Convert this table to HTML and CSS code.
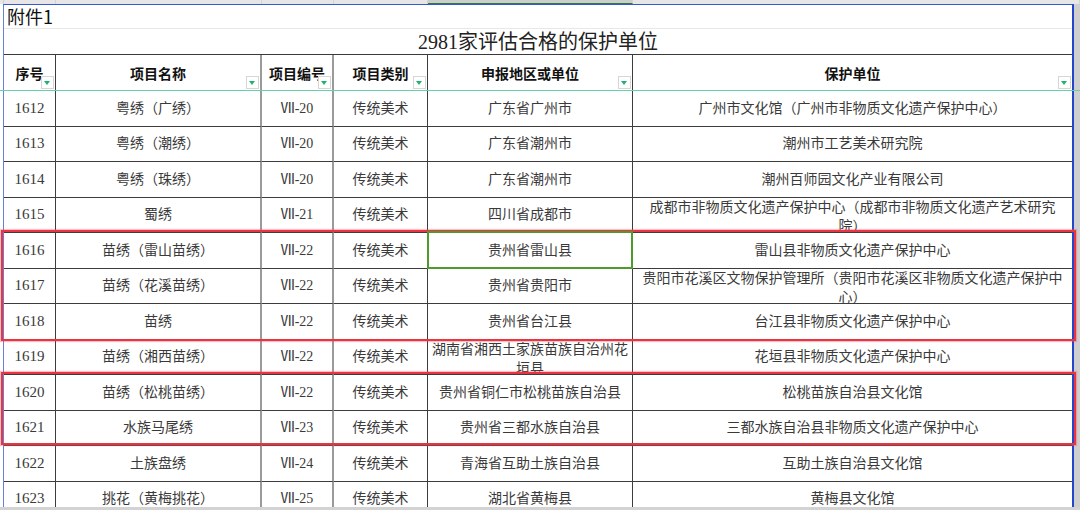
FILE: index.html
```html
<!DOCTYPE html>
<html lang="zh">
<head>
<meta charset="utf-8">
<title>2981家评估合格的保护单位</title>
<link rel="stylesheet" href="styles.css">
</head>
<body>
<div class="colbar">
  <span></span><span></span><span></span><span></span><span class="sel"></span><span></span>
</div>
<div class="main">
  <div class="sheet">
    <div class="attach">附件1</div>
    <div class="title">2981家评估合格的保护单位</div>
    <div class="grid">
      <div class="hd c1">序号<i class="flt"></i></div>
      <div class="hd c2">项目名称<i class="flt"></i></div>
      <div class="hd c3">项目编号<i class="flt"></i></div>
      <div class="hd c4">项目类别<i class="flt"></i></div>
      <div class="hd c5">申报地区或单位<i class="flt"></i></div>
      <div class="hd c6">保护单位<i class="flt"></i></div>

      <div class="td c1">1612</div><div class="td c2">粤绣（广绣）</div><div class="td c3">Ⅶ-20</div><div class="td c4">传统美术</div><div class="td c5">广东省广州市</div><div class="td c6">广州市文化馆（广州市非物质文化遗产保护中心）</div>
      <div class="td c1">1613</div><div class="td c2">粤绣（潮绣）</div><div class="td c3">Ⅶ-20</div><div class="td c4">传统美术</div><div class="td c5">广东省潮州市</div><div class="td c6">潮州市工艺美术研究院</div>
      <div class="td c1">1614</div><div class="td c2">粤绣（珠绣）</div><div class="td c3">Ⅶ-20</div><div class="td c4">传统美术</div><div class="td c5">广东省潮州市</div><div class="td c6">潮州百师园文化产业有限公司</div>
      <div class="td c1">1615</div><div class="td c2">蜀绣</div><div class="td c3">Ⅶ-21</div><div class="td c4">传统美术</div><div class="td c5">四川省成都市</div><div class="td c6">成都市非物质文化遗产保护中心（成都市非物质文化遗产艺术研究院）</div>
      <div class="td c1">1616</div><div class="td c2">苗绣（雷山苗绣）</div><div class="td c3">Ⅶ-22</div><div class="td c4">传统美术</div><div class="td c5">贵州省雷山县</div><div class="td c6">雷山县非物质文化遗产保护中心</div>
      <div class="td c1">1617</div><div class="td c2">苗绣（花溪苗绣）</div><div class="td c3">Ⅶ-22</div><div class="td c4">传统美术</div><div class="td c5">贵州省贵阳市</div><div class="td c6">贵阳市花溪区文物保护管理所（贵阳市花溪区非物质文化遗产保护中心）</div>
      <div class="td c1">1618</div><div class="td c2">苗绣</div><div class="td c3">Ⅶ-22</div><div class="td c4">传统美术</div><div class="td c5">贵州省台江县</div><div class="td c6">台江县非物质文化遗产保护中心</div>
      <div class="td c1">1619</div><div class="td c2">苗绣（湘西苗绣）</div><div class="td c3">Ⅶ-22</div><div class="td c4">传统美术</div><div class="td c5">湖南省湘西土家族苗族自治州花垣县</div><div class="td c6">花垣县非物质文化遗产保护中心</div>
      <div class="td c1">1620</div><div class="td c2">苗绣（松桃苗绣）</div><div class="td c3">Ⅶ-22</div><div class="td c4">传统美术</div><div class="td c5">贵州省铜仁市松桃苗族自治县</div><div class="td c6">松桃苗族自治县文化馆</div>
      <div class="td c1">1621</div><div class="td c2">水族马尾绣</div><div class="td c3">Ⅶ-23</div><div class="td c4">传统美术</div><div class="td c5">贵州省三都水族自治县</div><div class="td c6">三都水族自治县非物质文化遗产保护中心</div>
      <div class="td c1">1622</div><div class="td c2">土族盘绣</div><div class="td c3">Ⅶ-24</div><div class="td c4">传统美术</div><div class="td c5">青海省互助土族自治县</div><div class="td c6">互助土族自治县文化馆</div>
      <div class="td c1">1623</div><div class="td c2">挑花（黄梅挑花）</div><div class="td c3">Ⅶ-25</div><div class="td c4">传统美术</div><div class="td c5">湖北省黄梅县</div><div class="td c6">黄梅县文化馆</div>
    </div>
  </div>
  <div class="vscroll"></div>
</div>
<div class="hscroll"></div>

<div class="freeze"></div>
<div class="mark mark-a"></div>
<div class="mark mark-b"></div>
<div class="cursor"></div>
</body>
</html>
```
FILE: styles.css
```css
html, body {
  margin: 0;
  padding: 0;
}
body {
  position: relative;
  width: 1080px;
  height: 510px;
  overflow: hidden;
  background: #ffffff;
  font-family: "Liberation Serif", "Noto Sans CJK SC", serif;
  color: #333;
  text-spacing-trim: space-all;
}

/* column header strip */
.colbar {
  height: 4px;
  display: grid;
  grid-template-columns: 4px 52px 206px 72px 94px 205px 1fr;
  background: #e6e6e6;
}
.colbar::before {
  content: "";
  border-right: 1px solid #cfcfcf;
}
.colbar span {
  border-right: 1px solid #d4d4d4;
}
.colbar .sel {
  background: #cdcdcd;
  border-bottom: 1px solid #2f7d3a;
}

.main {
  display: flex;
  height: 503px;
}
.sheet {
  box-sizing: border-box;
  width: 1071px;
  margin-left: 3px;
  border-top: 1px solid #3558d2;
  border-left: 1px solid #6680dc;
  border-right: 2px solid #2446c8;
  overflow: hidden;
}
.vscroll {
  flex: 1;
  background: #cfcfcf;
}
.hscroll {
  height: 3px;
  background: #d3d3d3;
}

.attach {
  box-sizing: border-box;
  height: 24px;
  border-bottom: 1px solid #e8e8e8;
  padding-left: 3px;
  font-family: "Noto Sans CJK SC", sans-serif;
  font-size: 18px;
  line-height: 23px;
  color: #111;
}
.title {
  box-sizing: border-box;
  height: 26px;
  border-bottom: 1px solid #3a3a3a;
  text-align: center;
  font-size: 20px;
  line-height: 27px;
  color: #222;
}

.grid {
  display: grid;
  grid-template-columns: 52px 206px 72px 94px 205px 439px;
  grid-template-rows: 36px;
  grid-auto-rows: 35.5px;
}
.hd, .td {
  box-sizing: border-box;
  display: flex;
  align-items: center;
  align-items: safe center;
  justify-content: center;
  text-align: center;
  border-bottom: 1px solid #3c3c3c;
  border-right: 1px solid #3c3c3c;
  overflow: hidden;
  padding: 0 2px;
}
.hd {
  position: relative;
  font-weight: bold;
  font-size: 14px;
  color: #111;
  border-bottom-color: #e0e0e0;
}
.td {
  font-size: 14px;
  line-height: 19px;
  color: #3a3a3a;
}
.td.c1 {
  font-size: 15px;
}
.c2, .c3 {
  border-right: 2px solid #9a9a9a;
}
.c6 {
  border-right: none;
  padding: 0 7px;
}

/* filter button */
.flt {
  position: absolute;
  right: 1px;
  bottom: 1px;
  box-sizing: border-box;
  width: 13px;
  height: 13px;
  background: #fff;
  border: 1px solid #d6d6d6;
}
.flt::after {
  content: "";
  position: absolute;
  left: 2px;
  top: 4px;
  border-left: 3.5px solid transparent;
  border-right: 3.5px solid transparent;
  border-top: 4px solid #20b072;
}

/* overlays */
.freeze {
  position: absolute;
  left: 0;
  top: 90px;
  width: 1080px;
  height: 1px;
  background: #63d1a9;
}
.mark {
  position: absolute;
  box-sizing: border-box;
  left: 1px;
  width: 1075px;
  border: 2px solid #ec3340;
  box-shadow: 0 0 1px 1px rgba(240, 80, 90, 0.35);
}
.mark-a {
  top: 230px;
  height: 111px;
}
.mark-b {
  top: 372px;
  height: 73px;
}
.cursor {
  position: absolute;
  box-sizing: border-box;
  left: 427px;
  top: 231px;
  width: 206px;
  height: 38px;
  border: 2px solid #4e9a2c;
}
```
